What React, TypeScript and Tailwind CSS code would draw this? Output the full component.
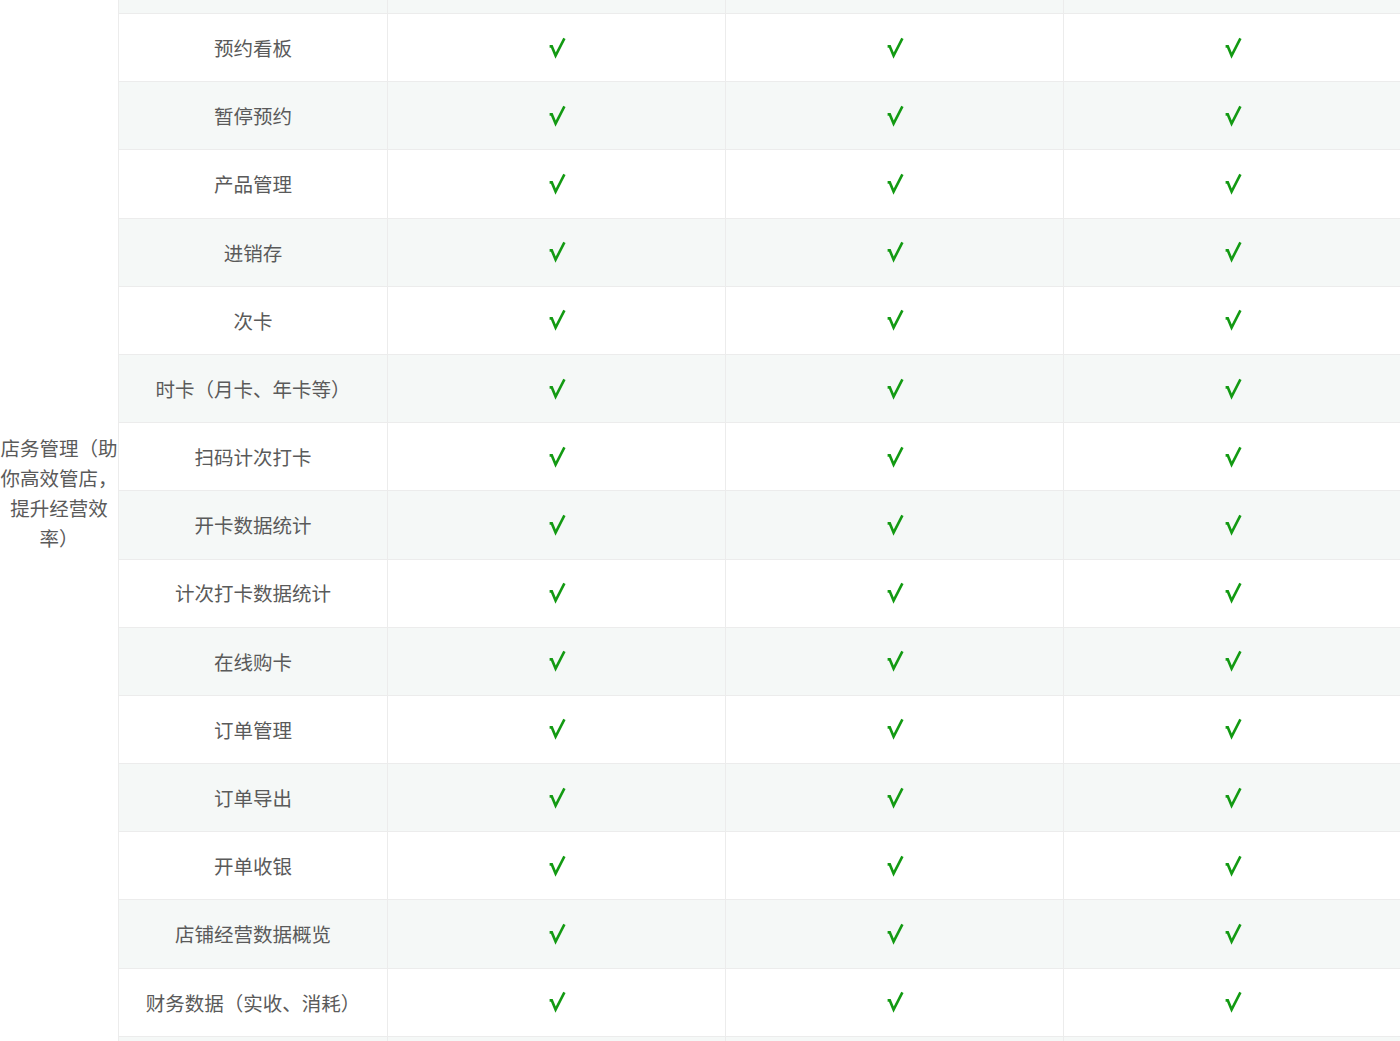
const features = [
  "预约看板",
  "暂停预约",
  "产品管理",
  "进销存",
  "次卡",
  "时卡（月卡、年卡等）",
  "扫码计次打卡",
  "开卡数据统计",
  "计次打卡数据统计",
  "在线购卡",
  "订单管理",
  "订单导出",
  "开单收银",
  "店铺经营数据概览",
  "财务数据（实收、消耗）",
];

function Check() {
  return (
    <svg width="20" height="22" viewBox="0 0 20 22" className="block">
      <path
        d="M2.6 9.4 L4.8 9.4 L8.6 18.6 L17.4 1.4"
        fill="none"
        stroke="#139a13"
        strokeWidth="2.6"
        strokeLinejoin="miter"
        strokeLinecap="butt"
      />
    </svg>
  );
}

function Row({ label, striped }: { label?: string; striped: boolean }) {
  return (
    <div
      className={`grid shrink-0 grid-cols-[269px_338px_338px_338px] h-[68.2px] border-b border-[#ececec] ${
        striped ? "bg-[#f5f8f7]" : "bg-white"
      }`}
    >
      <div className="flex items-center justify-center border-r border-[#ececec]">
        {label}
      </div>
      {[0, 1, 2].map((i) => (
        <div
          key={i}
          className="flex items-center justify-center border-r border-[#ececec]"
        >
          {label && <Check />}
        </div>
      ))}
    </div>
  );
}

export default function App() {
  return (
    <div
      className="w-[1400px] h-[1041px] overflow-hidden bg-white flex items-start text-[19.5px] text-[#5a5a5a]"
      style={{ fontFamily: '"Noto Sans CJK SC", "Noto Sans", sans-serif' }}
    >
      <div className="w-[119px] shrink-0 h-[1041px] border-r border-[#ececec] flex items-center justify-center pb-[56px]">
        <div className="w-[118px] text-center leading-[30px]">
          店务管理（助你高效管店，提升经营效率）
        </div>
      </div>
      <div className="flex flex-col shrink-0 w-[1283px]">
        <div className="h-[14px] shrink-0 bg-[#f5f8f7] border-b border-[#ececec] grid grid-cols-[269px_338px_338px_338px]">
          <div className="border-r border-[#ececec]" />
          <div className="border-r border-[#ececec]" />
          <div className="border-r border-[#ececec]" />
          <div className="border-r border-[#ececec]" />
        </div>
        {features.map((f, i) => (
          <Row key={f} label={f} striped={i % 2 === 1} />
        ))}
        <Row striped={true} />
      </div>
    </div>
  );
}
